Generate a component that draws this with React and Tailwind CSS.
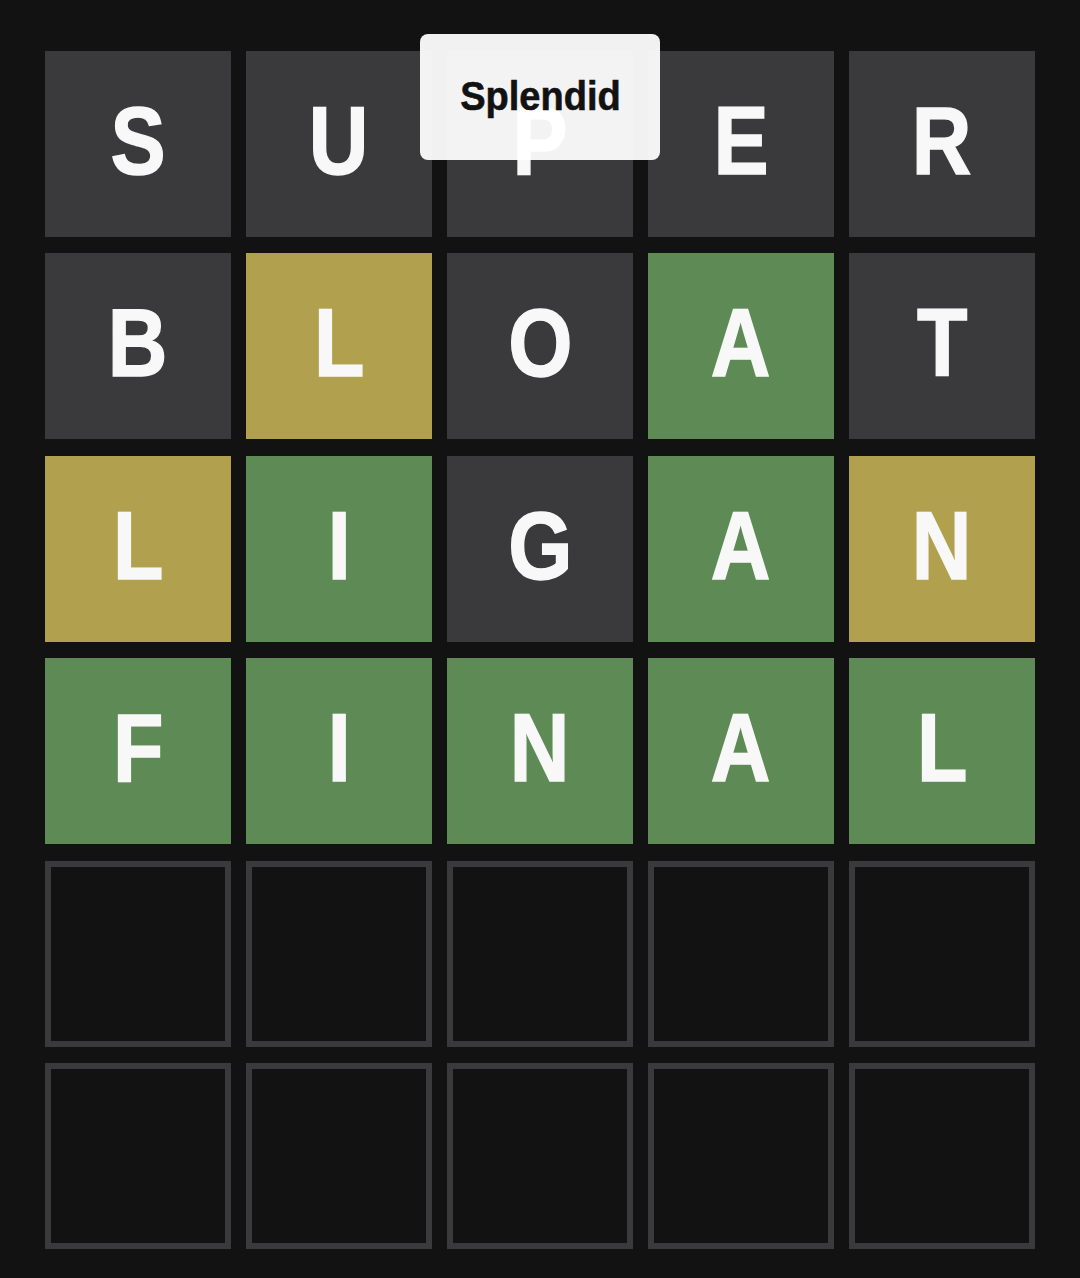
const rows = [
  ['S', 'U', 'P', 'E', 'R'],
  ['B', 'L', 'O', 'A', 'T'],
  ['L', 'I', 'G', 'A', 'N'],
  ['F', 'I', 'N', 'A', 'L'],
];

const states = [
  ['absent', 'absent', 'absent', 'absent', 'absent'],
  ['absent', 'present', 'absent', 'correct', 'absent'],
  ['present', 'correct', 'absent', 'correct', 'present'],
  ['correct', 'correct', 'correct', 'correct', 'correct'],
];

const tileColor = {
  absent: 'bg-[#3a3a3c]',
  present: 'bg-[#b1a14f]',
  correct: 'bg-[#5e8b55]',
};

const Tile = ({ letter, state }) => {
  if (!letter) {
    return <div className="h-[186px] border-[6px] border-[#3a3a3c]" />;
  }
  return (
    <div className={`h-[186px] flex items-center justify-center pb-[6px] ${tileColor[state]}`}>
      <span className="text-[96px] leading-none font-bold text-[#f8f8f8] scale-x-86 [-webkit-text-stroke:1.5px_#f8f8f8] font-['Liberation_Sans',Arial,sans-serif]">
        {letter}
      </span>
    </div>
  );
};

export default function App() {
  const board = [...rows, ['', '', '', '', ''], ['', '', '', '', '']];

  return (
    <main className="min-h-[1278px] bg-[#121212] px-[45px] pt-[51px] relative">
      <div className="grid grid-cols-5 gap-x-[15px] gap-y-[16.4px]">
        {board.map((row, r) =>
          row.map((letter, c) => (
            <Tile key={`${r}-${c}`} letter={letter} state={states[r]?.[c]} />
          ))
        )}
      </div>

      <div className="absolute left-[420px] top-[34px] w-[240px] h-[126px] rounded-lg bg-white/94 flex items-center justify-center pb-[2px]">
        <span className="text-[40px] leading-none font-bold text-[#121212] scale-x-95 [-webkit-text-stroke:0.6px_#121212] font-['Liberation_Sans',Arial,sans-serif]">
          Splendid
        </span>
      </div>
    </main>
  );
}
